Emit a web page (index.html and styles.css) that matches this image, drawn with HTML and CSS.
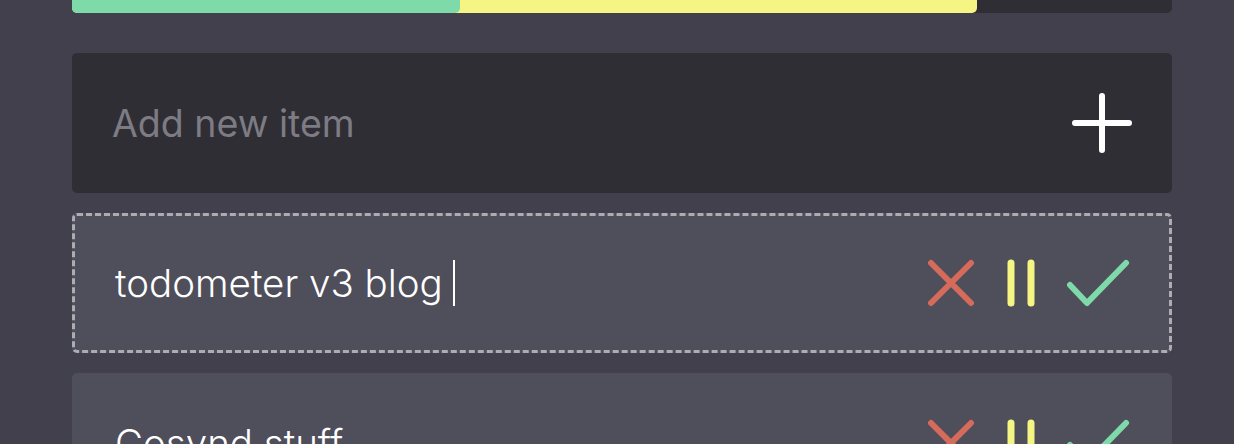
FILE: index.html
```html
<!DOCTYPE html>
<html lang="en">
<head>
  <meta charset="UTF-8">
  <title>todometer</title>
  <link rel="stylesheet" href="styles.css">
</head>
<body>

  <div class="app">
    <div class="progress">
      <div class="progress-paused" style="width: 82.3%;"></div>
      <div class="progress-done" style="width: 35.3%;"></div>
    </div>

    <div class="add-item">
      <span class="placeholder">Add new item</span>
      <svg class="icon-plus" width="60" height="60" viewBox="0 0 60 60">
        <path d="M30 3 V57 M3 30 H57" stroke="#ffffff" stroke-width="6" stroke-linecap="round" fill="none"/>
      </svg>
    </div>

    <div class="item editing">
      <span class="item-text">todometer v3 blog<span class="caret"></span></span>
      <div class="actions">
        <svg class="icon-delete" width="48" height="48" viewBox="0 0 48 48">
          <path d="M4 4 L44 44 M44 4 L4 44" stroke="#d66b5c" stroke-width="6" stroke-linecap="round" fill="none"/>
        </svg>
        <svg class="icon-pause" width="28" height="48" viewBox="0 0 28 48">
          <path d="M4 4 V44 M24 4 V44" stroke="#f5f584" stroke-width="7" stroke-linecap="round" fill="none"/>
        </svg>
        <svg class="icon-check" width="63" height="48" viewBox="0 0 63 48">
          <path d="M3 26 L20 44 L59 4" stroke="#7fdaa9" stroke-width="6" stroke-linecap="round" stroke-linejoin="round" fill="none"/>
        </svg>
      </div>
    </div>

    <div class="item">
      <span class="item-text">Cosynd stuff</span>
      <div class="actions">
        <svg class="icon-delete" width="48" height="48" viewBox="0 0 48 48">
          <path d="M4 4 L44 44 M44 4 L4 44" stroke="#d66b5c" stroke-width="6" stroke-linecap="round" fill="none"/>
        </svg>
        <svg class="icon-pause" width="28" height="48" viewBox="0 0 28 48">
          <path d="M4 4 V44 M24 4 V44" stroke="#f5f584" stroke-width="7" stroke-linecap="round" fill="none"/>
        </svg>
        <svg class="icon-check" width="63" height="48" viewBox="0 0 63 48">
          <path d="M3 26 L20 44 L59 4" stroke="#7fdaa9" stroke-width="6" stroke-linecap="round" stroke-linejoin="round" fill="none"/>
        </svg>
      </div>
    </div>
  </div>

</body>
</html>
```

FILE: styles.css
```css
:root {
  --bg-color: #41404c;
  --dark-color: #2f2e34;
  --item-color: #4f4e5b;
  --green: #7fdaa9;
  --yellow: #f5f584;
  --red: #d66b5c;
}

html, body {
  margin: 0;
  height: 100%;
  overflow: hidden;
}

body {
  background-color: var(--bg-color);
  font-family: Inter, "Liberation Sans", sans-serif;
  color: #ffffff;
}

.app {
  width: 1100px;
  margin: 0 62px 0 72px;
  display: flex;
  flex-direction: column;
  gap: 20px;
}

.progress {
  position: relative;
  height: 13px;
  background-color: var(--dark-color);
  border-radius: 0 0 5px 5px;
  margin-bottom: 20px;
}

.progress-paused,
.progress-done {
  position: absolute;
  top: 0;
  left: 0;
  height: 100%;
  border-radius: 0 0 5px 5px;
}

.progress-paused {
  background-color: var(--yellow);
}

.progress-done {
  background-color: var(--green);
}

.add-item {
  height: 140px;
  box-sizing: border-box;
  background-color: var(--dark-color);
  border-radius: 5px;
  display: flex;
  align-items: center;
  justify-content: space-between;
  padding: 0 40px;
}

.placeholder {
  font-size: 37.5px;
  font-weight: 400;
  color: #7d7c84;
}

.item {
  height: 140px;
  box-sizing: border-box;
  background-color: var(--item-color);
  border-radius: 5px;
  display: flex;
  align-items: center;
  justify-content: space-between;
  padding: 0 42px 0 43px;
}

.item.editing {
  border: 3px dashed #acacb1;
  padding: 0 39px 0 40px;
}

.item-text {
  font-size: 38.5px;
  font-weight: 300;
  display: flex;
  align-items: center;
}

.caret {
  display: inline-block;
  width: 2px;
  height: 46px;
  background-color: #ffffff;
  margin-left: 10px;
}

.actions {
  display: flex;
  align-items: center;
  gap: 32px;
}

.actions svg {
  display: block;
}
```
